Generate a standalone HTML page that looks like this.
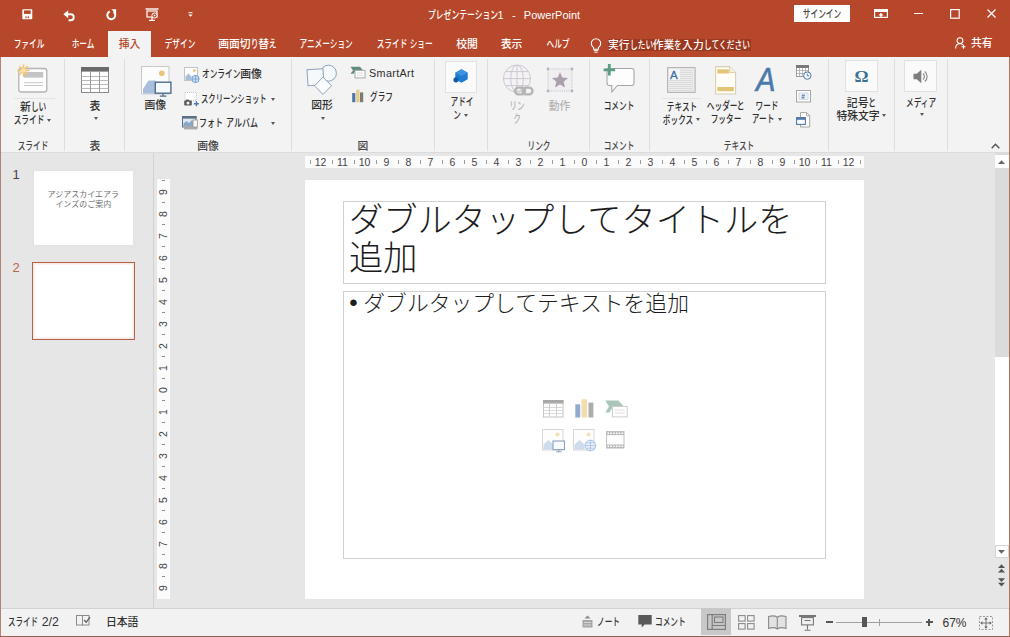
<!DOCTYPE html>
<html lang="ja"><head><meta charset="utf-8"><title>PowerPoint</title>
<style>
*{box-sizing:border-box;margin:0;padding:0}
html,body{width:1010px;height:637px;overflow:hidden;background:#e6e6e6}
body{position:relative;font-family:"Liberation Sans","Noto Sans CJK JP",sans-serif;font-size:10.8px;color:#262626}
.a{position:absolute}
.t{position:absolute;white-space:nowrap;font-weight:500}
.k,.h{display:inline-block;transform-origin:0 50%;font-weight:500}
.k{transform:scaleX(.71);margin-right:calc(var(--n)*-.29em)}
.h{transform:scaleX(.715);margin-right:calc(var(--n)*-.285em)}
.rn{font-size:10.5px;line-height:12px;color:#444}
</style></head><body>
<div class="a" style="left:0px;top:0px;width:1010px;height:57px;background:#b7472a;"></div>
<div class="a" style="left:108px;top:31px;width:43px;height:26px;background:#f3f3f3;"></div>
<div class="a" style="left:0px;top:57px;width:1010px;height:95px;background:#f3f3f3;"></div>
<div class="a" style="left:0px;top:152px;width:1010px;height:1px;background:#dcdcdc;"></div>
<div class="t" style="left:427.5px;top:7px;font-size:11px;line-height:16px;color:#fff"><span class="k" style="--n:9">プレゼンテーション</span>1 <span style="margin:0 5.2px">-</span> PowerPoint</div>
<div class="a" style="left:794px;top:5px;width:56px;height:17px;background:#fff;"></div>
<div class="t " style="top:5.5px;font-size:10.8px;line-height:16px;left:822px;transform:translateX(-50%);color:#444;"><span class="k" style="--n:5">サインイン</span></div>
<div class="t " style="top:36.4px;font-size:10.8px;line-height:16px;left:28.5px;transform:translateX(-50%);color:#fff;"><span class="k" style="--n:4">ファイル</span></div>
<div class="t " style="top:36.4px;font-size:10.8px;line-height:16px;left:82.5px;transform:translateX(-50%);color:#fff;"><span class="k" style="--n:3">ホーム</span></div>
<div class="t " style="top:36.4px;font-size:10.8px;line-height:16px;left:129.5px;transform:translateX(-50%);color:#b7472a;">挿入</div>
<div class="t " style="top:36.4px;font-size:10.8px;line-height:16px;left:179.5px;transform:translateX(-50%);color:#fff;"><span class="k" style="--n:4">デザイン</span></div>
<div class="t " style="top:36.4px;font-size:10.8px;line-height:16px;left:247.5px;transform:translateX(-50%);color:#fff;">画面切<span class="h" style="--n:1">り</span>替<span class="h" style="--n:1">え</span></div>
<div class="t " style="top:36.4px;font-size:10.8px;line-height:16px;left:325.5px;transform:translateX(-50%);color:#fff;"><span class="k" style="--n:7">アニメーション</span></div>
<div class="t " style="top:36.4px;font-size:10.8px;line-height:16px;left:404.5px;transform:translateX(-50%);color:#fff;"><span class="k" style="--n:4">スライド</span> <span class="k" style="--n:3">ショー</span></div>
<div class="t " style="top:36.4px;font-size:10.8px;line-height:16px;left:467px;transform:translateX(-50%);color:#fff;">校閲</div>
<div class="t " style="top:36.4px;font-size:10.8px;line-height:16px;left:511.5px;transform:translateX(-50%);color:#fff;">表示</div>
<div class="t " style="top:36.4px;font-size:10.8px;line-height:16px;left:558px;transform:translateX(-50%);color:#fff;"><span class="k" style="--n:3">ヘルプ</span></div>
<div class="a" style="left:607.5px;top:38.5px;width:143.5px;height:12.5px;background:#9c3920;"></div>
<div class="t " style="top:36.8px;font-size:10.8px;line-height:16px;left:608px;color:#fff;">実行<span class="h" style="--n:3">したい</span>作業<span class="h" style="--n:1">を</span>入力<span class="h" style="--n:6">してください</span></div>
<div class="t " style="top:35.0px;font-size:10.8px;line-height:16px;left:971px;color:#fff;">共有</div>
<div class="a" style="left:64px;top:59px;width:1px;height:92px;background:#dedede;"></div>
<div class="a" style="left:124px;top:59px;width:1px;height:92px;background:#dedede;"></div>
<div class="a" style="left:291px;top:59px;width:1px;height:92px;background:#dedede;"></div>
<div class="a" style="left:434px;top:59px;width:1px;height:92px;background:#dedede;"></div>
<div class="a" style="left:487px;top:59px;width:1px;height:92px;background:#dedede;"></div>
<div class="a" style="left:589px;top:59px;width:1px;height:92px;background:#dedede;"></div>
<div class="a" style="left:649px;top:59px;width:1px;height:92px;background:#dedede;"></div>
<div class="a" style="left:828px;top:59px;width:1px;height:92px;background:#dedede;"></div>
<div class="a" style="left:894px;top:59px;width:1px;height:92px;background:#dedede;"></div>
<div class="a" style="left:947px;top:59px;width:1px;height:92px;background:#dedede;"></div>
<div class="t " style="top:138.0px;font-size:10.8px;line-height:16px;left:32.6px;transform:translateX(-50%);color:#444;"><span class="k" style="--n:4">スライド</span></div>
<div class="t " style="top:138.0px;font-size:10.8px;line-height:16px;left:95px;transform:translateX(-50%);color:#444;">表</div>
<div class="t " style="top:138.0px;font-size:10.8px;line-height:16px;left:208px;transform:translateX(-50%);color:#444;">画像</div>
<div class="t " style="top:138.0px;font-size:10.8px;line-height:16px;left:363px;transform:translateX(-50%);color:#444;">図</div>
<div class="t " style="top:138.0px;font-size:10.8px;line-height:16px;left:538.5px;transform:translateX(-50%);color:#444;"><span class="k" style="--n:3">リンク</span></div>
<div class="t " style="top:138.0px;font-size:10.8px;line-height:16px;left:619px;transform:translateX(-50%);color:#444;"><span class="k" style="--n:4">コメント</span></div>
<div class="t " style="top:138.0px;font-size:10.8px;line-height:16px;left:739px;transform:translateX(-50%);color:#444;"><span class="k" style="--n:4">テキスト</span></div>
<div class="t " style="top:98.8px;font-size:10.8px;line-height:16px;left:33px;transform:translateX(-50%);color:#2e2e2e;">新<span class="h" style="--n:2">しい</span></div>
<div class="t " style="top:111.8px;font-size:10.8px;line-height:16px;left:29.2px;transform:translateX(-50%);color:#2e2e2e;"><span class="k" style="--n:4">スライド</span></div>
<div class="a" style="left:47.1px;top:118.9px;width:0;height:0;border-left:2.8px solid transparent;border-right:2.8px solid transparent;border-top:3.2px solid #585858"></div>
<div class="t " style="top:97.7px;font-size:10.8px;line-height:16px;left:95px;transform:translateX(-50%);color:#2e2e2e;">表</div>
<div class="a" style="left:93.5px;top:117.2px;width:0;height:0;border-left:2.8px solid transparent;border-right:2.8px solid transparent;border-top:3.2px solid #585858"></div>
<div class="t " style="top:97.2px;font-size:10.8px;line-height:16px;left:155.3px;transform:translateX(-50%);color:#2e2e2e;">画像</div>
<div class="t " style="top:66.0px;font-size:10.8px;line-height:16px;left:202px;color:#2e2e2e;"><span class="k" style="--n:5">オンライン</span>画像</div>
<div class="t " style="top:91.0px;font-size:10.8px;line-height:16px;left:201.2px;color:#2e2e2e;"><span class="k" style="--n:9;transform:scaleX(0.68);margin-right:-2.88em">スクリーンショット</span></div>
<div class="a" style="left:270.7px;top:97.9px;width:0;height:0;border-left:2.8px solid transparent;border-right:2.8px solid transparent;border-top:3.2px solid #585858"></div>
<div class="t " style="top:115.0px;font-size:10.8px;line-height:16px;left:199.2px;color:#2e2e2e;word-spacing:.2px;"><span class="k" style="--n:3;transform:scaleX(0.74);margin-right:-0.78em">フォト</span> <span class="k" style="--n:4;transform:scaleX(0.74);margin-right:-1.04em">アルバム</span></div>
<div class="a" style="left:270.7px;top:121.9px;width:0;height:0;border-left:2.8px solid transparent;border-right:2.8px solid transparent;border-top:3.2px solid #585858"></div>
<div class="t " style="top:97.0px;font-size:10.8px;line-height:16px;left:322px;transform:translateX(-50%);color:#2e2e2e;">図形</div>
<div class="a" style="left:320.6px;top:117.4px;width:0;height:0;border-left:2.8px solid transparent;border-right:2.8px solid transparent;border-top:3.2px solid #585858"></div>
<div class="t " style="top:65.0px;font-size:10.8px;line-height:16px;left:369px;color:#2e2e2e;letter-spacing:.35px;">SmartArt</div>
<div class="t " style="top:88.5px;font-size:10.8px;line-height:16px;left:369.5px;color:#2e2e2e;"><span class="k" style="--n:3">グラフ</span></div>
<div class="a" style="left:444.8px;top:60.5px;width:32.6px;height:32px;background:#fafafa;border:1px solid #e1e1e1"></div>
<div class="t " style="top:94.0px;font-size:10.8px;line-height:16px;left:461.5px;transform:translateX(-50%);color:#2e2e2e;"><span class="k" style="--n:3">アドイ</span></div>
<div class="t " style="top:107.0px;font-size:10.8px;line-height:16px;left:457px;transform:translateX(-50%);color:#2e2e2e;"><span class="k" style="--n:1">ン</span></div>
<div class="a" style="left:464.2px;top:113.9px;width:0;height:0;border-left:2.8px solid transparent;border-right:2.8px solid transparent;border-top:3.2px solid #585858"></div>
<div class="t " style="top:97.7px;font-size:10.8px;line-height:16px;left:517px;transform:translateX(-50%);color:#b3b3b3;"><span class="k" style="--n:2">リン</span></div>
<div class="t " style="top:110.9px;font-size:10.8px;line-height:16px;left:517px;transform:translateX(-50%);color:#b3b3b3;"><span class="k" style="--n:1">ク</span></div>
<div class="t " style="top:97.7px;font-size:10.8px;line-height:16px;left:559.5px;transform:translateX(-50%);color:#b3b3b3;">動作</div>
<div class="t " style="top:97.7px;font-size:10.8px;line-height:16px;left:619px;transform:translateX(-50%);color:#2e2e2e;"><span class="k" style="--n:4">コメント</span></div>
<div class="t " style="top:98.5px;font-size:10.8px;line-height:16px;left:681.5px;transform:translateX(-50%);color:#2e2e2e;"><span class="k" style="--n:4">テキスト</span></div>
<div class="t " style="top:111.5px;font-size:10.8px;line-height:16px;left:677.5px;transform:translateX(-50%);color:#2e2e2e;"><span class="k" style="--n:4">ボックス</span></div>
<div class="a" style="left:695.8px;top:118.4px;width:0;height:0;border-left:2.8px solid transparent;border-right:2.8px solid transparent;border-top:3.2px solid #585858"></div>
<div class="t " style="top:98.0px;font-size:10.8px;line-height:16px;left:725.5px;transform:translateX(-50%);color:#2e2e2e;"><span class="k" style="--n:4">ヘッダー</span><span class="h" style="--n:1">と</span></div>
<div class="t " style="top:111.0px;font-size:10.8px;line-height:16px;left:725.5px;transform:translateX(-50%);color:#2e2e2e;"><span class="k" style="--n:4">フッター</span></div>
<div class="t " style="top:98.0px;font-size:10.8px;line-height:16px;left:767.3px;transform:translateX(-50%);color:#2e2e2e;"><span class="k" style="--n:3">ワード</span></div>
<div class="t " style="top:111.0px;font-size:10.8px;line-height:16px;left:763px;transform:translateX(-50%);color:#2e2e2e;"><span class="k" style="--n:3">アート</span></div>
<div class="a" style="left:778.2px;top:117.9px;width:0;height:0;border-left:2.8px solid transparent;border-right:2.8px solid transparent;border-top:3.2px solid #585858"></div>
<div class="a" style="left:845px;top:60.2px;width:32.8px;height:32.3px;background:#fafafa;border:1px solid #e1e1e1"></div>
<div class="t " style="top:94.5px;font-size:10.8px;line-height:16px;left:861.5px;transform:translateX(-50%);color:#2e2e2e;">記号<span class="h" style="--n:1">と</span></div>
<div class="t " style="top:107.5px;font-size:10.8px;line-height:16px;left:858px;transform:translateX(-50%);color:#2e2e2e;">特殊文字</div>
<div class="a" style="left:881.7px;top:114.4px;width:0;height:0;border-left:2.8px solid transparent;border-right:2.8px solid transparent;border-top:3.2px solid #585858"></div>
<div class="a" style="left:904.2px;top:60.2px;width:32.8px;height:32.3px;background:#fafafa;border:1px solid #e1e1e1"></div>
<div class="t " style="top:94.5px;font-size:10.8px;line-height:16px;left:921px;transform:translateX(-50%);color:#2e2e2e;"><span class="k" style="--n:4">メディア</span></div>
<div class="a" style="left:920px;top:113.4px;width:0;height:0;border-left:2.8px solid transparent;border-right:2.8px solid transparent;border-top:3.2px solid #585858"></div>
<svg class="a" style="left:22px;top:9px" width="11" height="11" viewBox="0 0 11 11"><rect x="0.3" y="0.3" width="10" height="10" rx=".8" fill="#fff"/><rect x="1.900" y="1.400" width="6.800" height="3.500" fill="#b7472a"/><rect x="3.300" y="7.400" width="1.300" height="1.800" fill="#b7472a"/><rect x="5.700" y="7.400" width="1.300" height="1.800" fill="#b7472a"/></svg>
<svg class="a" style="left:63px;top:9.5px" width="13" height="12" viewBox="0 0 13 12"><path d="M3.500 4.300h4.200a3 3 0 0 1 0 6h-2.200" fill="none" stroke="#fff" stroke-width="2"/><path d="M5.200 0.300v8L0.400 4.300z" fill="#fff"/></svg>
<svg class="a" style="left:105px;top:9px" width="13" height="12" viewBox="0 0 13 12"><path d="M8.600 2.900A4 4 0 1 1 4.700 2.500" fill="none" stroke="#fff" stroke-width="2"/><path d="M6.300 0.300h4.800v4.800z" fill="#fff"/></svg>
<svg class="a" style="left:145px;top:8px" width="14" height="13" viewBox="0 0 14 13"><path d="M0.5 1h13" stroke="#fff" stroke-width="1.4"/><rect x="2" y="3" width="10" height="6" fill="none" stroke="#fff" stroke-width="1.2"/><path d="M7 9v3M4 12.3h6" stroke="#fff" stroke-width="1.2"/><circle cx="9.5" cy="7.5" r="2.6" fill="#b7472a" stroke="#fff" stroke-width="1"/><path d="M8.8 6.3v2.4l2-1.2z" fill="#fff"/></svg>
<svg class="a" style="left:187.5px;top:12px" width="5" height="5" viewBox="0 0 5 5"><path d="M0.5 0.7h4" stroke="#fff" stroke-width="1"/><path d="M0.3 2.4h4.4L2.5 4.8z" fill="#fff"/></svg>
<svg class="a" style="left:874px;top:9px" width="14" height="9" viewBox="0 0 14 9"><rect x="0.6" y="0.6" width="12.8" height="7.8" fill="none" stroke="#fff" stroke-width="1.2"/><rect x="0.6" y="0.6" width="12.8" height="2.4" fill="#fff"/><path d="M7 3.8l2.6 2.6h-1.7v1.4h-1.8v-1.4h-1.7z" fill="#fff"/></svg>
<div class="a" style="left:913.5px;top:13px;width:9px;height:1.2px;background:#fff;"></div>
<svg class="a" style="left:950px;top:9px" width="10" height="10" viewBox="0 0 10 10"><rect x="0.6" y="0.6" width="8.6" height="8.6" fill="none" stroke="#fff" stroke-width="1.2"/></svg>
<svg class="a" style="left:987px;top:9px" width="9" height="9" viewBox="0 0 9 9"><path d="M0.5 0.5l8 8M8.5 0.5l-8 8" stroke="#fff" stroke-width="1.2"/></svg>
<svg class="a" style="left:590px;top:37.5px" width="12" height="15" viewBox="0 0 12 15"><path d="M3.6 9.6C2.2 8.6 1.3 7.2 1.3 5.5a4.7 4.7 0 0 1 9.4 0c0 1.7-.9 3.1-2.3 4.1v1.6H3.6z" fill="none" stroke="#fff" stroke-width="1.1"/><path d="M3.8 12.6h4.4M4.4 14.2h3.2" stroke="#fff" stroke-width="1"/></svg>
<svg class="a" style="left:955px;top:37px" width="11" height="12" viewBox="0 0 11 12"><circle cx="5" cy="3.6" r="2.9" fill="none" stroke="#fff" stroke-width="1.1"/><path d="M0.6 11.5c0-3 1.8-4.7 4.4-4.7 1.2 0 2.2.4 3 1" fill="none" stroke="#fff" stroke-width="1.1"/><path d="M8.5 7.8v4M6.5 9.8h4" stroke="#fff" stroke-width="1.1"/></svg>
<svg class="a" style="left:16px;top:63px" width="32" height="31" viewBox="0 0 32 31"><rect x="2.8" y="5.5" width="28" height="23.5" rx="2.5" fill="#fdfdfd" stroke="#b4b4b4" stroke-width="1.3"/><rect x="7.7" y="9" width="19.5" height="5.6" fill="#c4c4c4"/><path d="M8 19.7h19M8 22.5h19" stroke="#c8c8c8" stroke-width="1"/><g transform="translate(1 1)"><g stroke="#f2c46a" stroke-width="1.500"><path d="M6.500 0.500v12M0.500 6.500h12M2.300 2.300l8.400 8.400M10.700 2.300l-8.400 8.400"/></g><circle cx="6.500" cy="6.500" r="2.200" fill="#fbe3a8"/></g></svg>
<div class="a" style="left:13.5px;top:98px;width:41.5px;height:1px;background:#e4e4e4;"></div>
<svg class="a" style="left:81px;top:67px" width="28" height="26" viewBox="0 0 28 26"><rect x="0.5" y="0.5" width="27" height="25" fill="#fff" stroke="#8a8a8a"/><rect x="0" y="0" width="28" height="4.6" fill="#6b6b6b"/><path d="M0.5 9.5h27" stroke="#b9b9b9"/><path d="M0.5 13.5h27" stroke="#b9b9b9"/><path d="M0.5 17.5h27" stroke="#b9b9b9"/><path d="M0.5 21.5h27" stroke="#b9b9b9"/><path d="M9.5 4v21.5M18.5 4v21.5" stroke="#9a9a9a"/></svg>
<svg class="a" style="left:141px;top:66px" width="31" height="31" viewBox="0 0 31 31"><rect x="0.5" y="0.5" width="27.5" height="27.5" fill="#fcfcfc" stroke="#c9c9c9"/><circle cx="20.8" cy="7.2" r="2.8" fill="#e9c578"/><path d="M2 27.5V23l5.500-8.500h7v13z" fill="#a9bedb"/><rect x="14.3" y="16.2" width="15.6" height="11" fill="#f3f9fd" stroke="#4f6d8c" stroke-width="1.4"/><path d="M22 27.5v2.3M18.8 30.2h6.6" stroke="#4f6d8c" stroke-width="1.3"/></svg>
<svg class="a" style="left:184px;top:67px" width="16" height="16" viewBox="0 0 16 16"><rect x="0.5" y="0.5" width="13" height="13" fill="#fcfcfc" stroke="#c4c4c4"/><circle cx="10.3" cy="3.6" r="1.4" fill="#e9c578"/><path d="M1.5 13V9.5l3-3 3 3V13z" fill="#a9bedb"/><circle cx="11.5" cy="12" r="3.6" fill="#cfe0f2" stroke="#6f9dd1" stroke-width="1"/><path d="M8 12h7M11.5 8.5v7" stroke="#6f9dd1" stroke-width=".8"/></svg>
<svg class="a" style="left:184px;top:92px" width="15" height="15" viewBox="0 0 15 15"><rect x="1" y="0.5" width="11.5" height="8" fill="#fcfcfc" stroke="#c9c9c9" stroke-dasharray="1 1"/><rect x="0.2" y="8.6" width="7.6" height="5" rx=".8" fill="#5a5a5a"/><rect x="2" y="7.6" width="3" height="1.4" fill="#5a5a5a"/><circle cx="4" cy="11.1" r="1.5" fill="#f3f3f3"/><path d="M12.4 9.3v5M9.9 11.8h5" stroke="#4a79b3" stroke-width="1.4"/></svg>
<svg class="a" style="left:182px;top:116px" width="16" height="14" viewBox="0 0 16 14"><rect x="0.5" y="0.5" width="13.5" height="10.5" fill="#dfe8f2" stroke="#5d6f85"/><rect x="0" y="0" width="14.5" height="2.6" fill="#5d6f85"/><path d="M1.5 10V7.5l3-2.5 2.5 2 3-3 3 3V10z" fill="#8aa7c7"/><rect x="2" y="10.6" width="13.5" height="2.8" fill="#a9a9a9"/><rect x="11" y="4" width="4.5" height="7" fill="#f6f6f6" stroke="#9a9a9a" stroke-width=".8"/></svg>
<svg class="a" style="left:306px;top:64px" width="32" height="32" viewBox="0 0 32 32"><circle cx="22.4" cy="9.2" r="8" fill="#f6f9fc" stroke="#8da2ba"/><rect x="1.5" y="5.2" width="16" height="16" fill="#f6f9fc" stroke="#8da2ba" transform="rotate(-4 9.5 13)"/><path d="M17 13.2l8.6 8.6-8.6 8.6-8.6-8.6z" fill="#fafcfe" stroke="#8da2ba"/></svg>
<svg class="a" style="left:350px;top:66px" width="16" height="13" viewBox="0 0 16 13"><path d="M0.5 0.8h9.5l3.2 3.6H6L3.5 7.8H0.5L3 4.4z" fill="#5f8f7c"/><rect x="5" y="4.4" width="10" height="7.5" fill="#fdfdfd" stroke="#a8a8a8"/><path d="M7 7h6M7 9.3h6" stroke="#d4d4d4" stroke-width=".8"/></svg>
<svg class="a" style="left:352px;top:89px" width="12" height="14" viewBox="0 0 12 14"><rect x="0.2" y="4" width="3.1" height="9.2" fill="#4e76a4"/><rect x="4.2" y="0.7" width="3.3" height="12.5" fill="#e8c98c"/><rect x="8" y="3.4" width="3.2" height="9.8" fill="#7d7d6e"/></svg>
<svg class="a" style="left:453px;top:69px" width="16" height="14" viewBox="0 0 16 14"><path d="M8.5 0.3l6.2 3.4v6.6l-6.2 3.4-6.2-3.4V3.7z" fill="#1e7bd0"/><path d="M8.5 0.3l6.2 3.4-6.2 3.4-6.2-3.4z" fill="#3b93e2"/><circle cx="3" cy="10.8" r="2.6" fill="#0f5ca8"/></svg>
<svg class="a" style="left:502px;top:64px" width="33" height="33" viewBox="0 0 33 33"><g fill="none" stroke="#cfc7d3" stroke-width="1"><circle cx="15" cy="14.6" r="13.6"/><ellipse cx="15" cy="14.6" rx="6.3" ry="13.6"/><path d="M15 1v27.2M1.4 14.6h27.2M3.3 7.6h23.4M3.3 21.6h23.4"/></g><g fill="none" stroke="#b4b4b4" stroke-width="2.3"><rect x="13" y="23.6" width="10" height="6.8" rx="3.4"/><rect x="20.5" y="23.6" width="10" height="6.8" rx="3.4"/></g></svg>
<svg class="a" style="left:545px;top:66px" width="30" height="28" viewBox="0 0 30 28"><rect x="3" y="3" width="24" height="22" fill="#f0eef1" stroke="#c9c3cc" stroke-dasharray="1.2 1"/><g fill="#b9b2bd"><circle cx="3" cy="3" r="1.4"/><circle cx="27" cy="3" r="1.4"/><circle cx="3" cy="25" r="1.4"/><circle cx="27" cy="25" r="1.4"/></g><path d="M15 6.2l2.3 5.3 5.7.5-4.3 3.8 1.3 5.6-5-3-5 3 1.3-5.6L7 12l5.7-.5z" fill="#a9a1ad"/></svg>
<svg class="a" style="left:603px;top:63px" width="33" height="31" viewBox="0 0 33 31"><path d="M4 5.5h24.5a2.5 2.5 0 0 1 2.5 2.500v12a2.500 2.500 0 0 1-2.500 2.500H14.500l-5.700 6.300V22.500H6.500a2.500 2.500 0 0 1-2.500-2.500z" fill="#fdfdfd" stroke="#a6a6a6" stroke-width="1.1"/><path d="M6.300 1v11.600M0.600 6.800h11.500" stroke="#5d9c82" stroke-width="2.800"/></svg>
<svg class="a" style="left:667px;top:67px" width="29" height="26" viewBox="0 0 29 26"><rect x="0.6" y="0.6" width="27.500" height="24.800" fill="#ececec" stroke="#b3b3b3" stroke-width="1.1"/><path d="M2 3.5h24" stroke="#dcdcdc" stroke-width="1"/><path d="M2 5.5h24" stroke="#dcdcdc" stroke-width="1"/><path d="M2 7.5h24" stroke="#dcdcdc" stroke-width="1"/><path d="M2 9.5h24" stroke="#dcdcdc" stroke-width="1"/><path d="M2 11.5h24" stroke="#dcdcdc" stroke-width="1"/><path d="M2 13.5h24" stroke="#dcdcdc" stroke-width="1"/><path d="M2 15.5h24" stroke="#dcdcdc" stroke-width="1"/><path d="M2 17.5h24" stroke="#dcdcdc" stroke-width="1"/><path d="M2 19.5h24" stroke="#dcdcdc" stroke-width="1"/><path d="M2 21.5h24" stroke="#dcdcdc" stroke-width="1"/><path d="M2 23.5h24" stroke="#dcdcdc" stroke-width="1"/><rect x="2" y="2" width="11" height="11" fill="#f4f4f4"/><text x="3" y="11.600" font-family="Liberation Sans,sans-serif" font-size="11.500" fill="#3c6fa8" stroke="#3c6fa8" stroke-width=".3">A</text></svg>
<div class="a" style="left:661.5px;top:98px;width:40.5px;height:1px;background:#e4e4e4;"></div>
<svg class="a" style="left:715px;top:66px" width="22" height="29" viewBox="0 0 22 29"><path d="M0.600 0.600h14l6 6v21.400h-20z" fill="#fffdf5" stroke="#d9cfb2" stroke-width="1.100"/><path d="M14.600 0.600v6h6" fill="#f6f0dc" stroke="#d9cfb2" stroke-width="1"/><rect x="2.300" y="3.300" width="11.500" height="4.200" fill="#e3c578"/><rect x="2.300" y="21" width="16.500" height="4.200" fill="#e3c578"/></svg>
<div class="t" style="left:755.500px;top:61px;font-size:33px;line-height:38px;font-style:italic;font-weight:normal;-webkit-text-stroke:.6px #4a7aab;color:#4a7aab;transform:scaleX(.88);transform-origin:0 0">A</div>
<svg class="a" style="left:796px;top:65px" width="16" height="15" viewBox="0 0 16 15"><rect x="0.500" y="0.500" width="12" height="11" fill="#fdfdfd" stroke="#9a9a9a"/><rect x="0" y="0" width="13" height="3" fill="#7a7a7a"/><path d="M3.5 3v8.500" stroke="#a9a9a9" stroke-width=".8"/><path d="M6.5 3v8.500" stroke="#a9a9a9" stroke-width=".8"/><path d="M9.5 3v8.500" stroke="#a9a9a9" stroke-width=".8"/><path d="M0.500 5.5h12" stroke="#a9a9a9" stroke-width=".8"/><path d="M0.500 8.5h12" stroke="#a9a9a9" stroke-width=".8"/><circle cx="11.300" cy="10.600" r="3.700" fill="#f4f8fc" stroke="#4f79a8" stroke-width="1"/><path d="M11.300 8.500v2.300h1.800" fill="none" stroke="#4f79a8" stroke-width=".9"/></svg>
<svg class="a" style="left:796px;top:89.5px" width="16" height="13" viewBox="0 0 16 13"><rect x="0.500" y="0.500" width="14" height="11.500" fill="#fdfdfd" stroke="#a6a6a6"/><rect x="3" y="3" width="9" height="6.500" fill="#eef3f9" stroke="#c6d3e3" stroke-width=".8"/><text x="5.200" y="9" font-family="Liberation Sans,sans-serif" font-size="6.500" font-weight="bold" fill="#3c6fa8">#</text></svg>
<svg class="a" style="left:796px;top:111.5px" width="15" height="16" viewBox="0 0 15 16"><path d="M4.500 0.600h6.200l3 3v11.400h-9.200z" fill="#fdfdfd" stroke="#a6a6a6"/><path d="M10.500 0.600v3.200h3.200" fill="none" stroke="#a6a6a6" stroke-width=".9"/><rect x="0.600" y="5.600" width="8.800" height="6.800" fill="#fdfdfd" stroke="#4f79a8" stroke-width="1.100"/><rect x="0.600" y="5.600" width="8.800" height="2.200" fill="#4f79a8"/></svg>
<div class="t" style="left:861.500px;top:63.500px;font-family:'Liberation Serif',serif;font-size:17.500px;line-height:24px;font-weight:bold;color:#3b7196;transform:translateX(-50%)">Ω</div>
<svg class="a" style="left:913px;top:69px" width="17" height="15" viewBox="0 0 17 15"><path d="M0.500 4.800h3.300L8.300 0.800v13.400L3.800 10.200H0.500z" fill="#7d7d7d"/><path d="M10 4.500a4 4 0 0 1 0 6M11.800 2.500a6.600 6.600 0 0 1 0 10" fill="none" stroke="#8d8d8d" stroke-width="1.200"/></svg>
<svg class="a" style="left:991px;top:143px" width="9" height="6" viewBox="0 0 9 6"><path d="M0.700 5.300L4.500 1.300l3.800 4" fill="none" stroke="#555" stroke-width="1.400"/></svg>
<div class="a" style="left:0px;top:153px;width:1010px;height:455px;background:#e6e6e6;"></div>
<div class="a" style="left:153px;top:153px;width:1px;height:455px;background:#d2d2d2;"></div>
<div class="t " style="top:165.0px;font-size:13px;line-height:20px;left:16.2px;transform:translateX(-50%);color:#444;">1</div>
<div class="a" style="left:33px;top:170px;width:101px;height:76.3px;background:#fff;border:1px solid #e4e4e4"></div>
<div class="t" style="left:83.300px;top:190px;font-size:8px;line-height:9.600px;color:#707070;font-weight:400;text-align:center;transform:translateX(-50%)">アジアスカイエアラ<br>インズのご案内</div>
<div class="t " style="top:258.0px;font-size:13px;line-height:20px;left:16.2px;transform:translateX(-50%);color:#b8664c;">2</div>
<div class="a" style="left:32px;top:262px;width:103px;height:77.5px;background:#fff;border:1.800px solid #b26248;box-shadow:inset 0 0 0 1.500px #fbeae3"></div>
<div class="a" style="left:305px;top:156px;width:559px;height:12px;background:#fbfbfb;"></div>
<div class="a" style="left:157px;top:179px;width:12.5px;height:420px;background:#fbfbfb;"></div>
<div class="t rn" style="left:320.5px;top:156px;transform:translateX(-50%)">12</div>
<div class="t rn" style="left:342.5px;top:156px;transform:translateX(-50%)">11</div>
<div class="t rn" style="left:364.5px;top:156px;transform:translateX(-50%)">10</div>
<div class="t rn" style="left:386.5px;top:156px;transform:translateX(-50%)">9</div>
<div class="t rn" style="left:408.5px;top:156px;transform:translateX(-50%)">8</div>
<div class="t rn" style="left:430.5px;top:156px;transform:translateX(-50%)">7</div>
<div class="t rn" style="left:452.5px;top:156px;transform:translateX(-50%)">6</div>
<div class="t rn" style="left:474.5px;top:156px;transform:translateX(-50%)">5</div>
<div class="t rn" style="left:496.5px;top:156px;transform:translateX(-50%)">4</div>
<div class="t rn" style="left:518.5px;top:156px;transform:translateX(-50%)">3</div>
<div class="t rn" style="left:540.5px;top:156px;transform:translateX(-50%)">2</div>
<div class="t rn" style="left:562.5px;top:156px;transform:translateX(-50%)">1</div>
<div class="t rn" style="left:584.5px;top:156px;transform:translateX(-50%)">0</div>
<div class="t rn" style="left:606.5px;top:156px;transform:translateX(-50%)">1</div>
<div class="t rn" style="left:628.5px;top:156px;transform:translateX(-50%)">2</div>
<div class="t rn" style="left:650.5px;top:156px;transform:translateX(-50%)">3</div>
<div class="t rn" style="left:672.5px;top:156px;transform:translateX(-50%)">4</div>
<div class="t rn" style="left:694.5px;top:156px;transform:translateX(-50%)">5</div>
<div class="t rn" style="left:716.5px;top:156px;transform:translateX(-50%)">6</div>
<div class="t rn" style="left:738.5px;top:156px;transform:translateX(-50%)">7</div>
<div class="t rn" style="left:760.5px;top:156px;transform:translateX(-50%)">8</div>
<div class="t rn" style="left:782.5px;top:156px;transform:translateX(-50%)">9</div>
<div class="t rn" style="left:804.5px;top:156px;transform:translateX(-50%)">10</div>
<div class="t rn" style="left:826.5px;top:156px;transform:translateX(-50%)">11</div>
<div class="t rn" style="left:848.5px;top:156px;transform:translateX(-50%)">12</div>
<div class="a" style="left:309.5px;top:160px;width:1px;height:4px;background:#9a9a9a;"></div>
<div class="a" style="left:331.5px;top:160px;width:1px;height:4px;background:#9a9a9a;"></div>
<div class="a" style="left:353.5px;top:160px;width:1px;height:4px;background:#9a9a9a;"></div>
<div class="a" style="left:375.5px;top:160px;width:1px;height:4px;background:#9a9a9a;"></div>
<div class="a" style="left:397.5px;top:160px;width:1px;height:4px;background:#9a9a9a;"></div>
<div class="a" style="left:419.5px;top:160px;width:1px;height:4px;background:#9a9a9a;"></div>
<div class="a" style="left:441.5px;top:160px;width:1px;height:4px;background:#9a9a9a;"></div>
<div class="a" style="left:463.5px;top:160px;width:1px;height:4px;background:#9a9a9a;"></div>
<div class="a" style="left:485.5px;top:160px;width:1px;height:4px;background:#9a9a9a;"></div>
<div class="a" style="left:507.5px;top:160px;width:1px;height:4px;background:#9a9a9a;"></div>
<div class="a" style="left:529.5px;top:160px;width:1px;height:4px;background:#9a9a9a;"></div>
<div class="a" style="left:551.5px;top:160px;width:1px;height:4px;background:#9a9a9a;"></div>
<div class="a" style="left:573.5px;top:160px;width:1px;height:4px;background:#9a9a9a;"></div>
<div class="a" style="left:595.5px;top:160px;width:1px;height:4px;background:#9a9a9a;"></div>
<div class="a" style="left:617.5px;top:160px;width:1px;height:4px;background:#9a9a9a;"></div>
<div class="a" style="left:639.5px;top:160px;width:1px;height:4px;background:#9a9a9a;"></div>
<div class="a" style="left:661.5px;top:160px;width:1px;height:4px;background:#9a9a9a;"></div>
<div class="a" style="left:683.5px;top:160px;width:1px;height:4px;background:#9a9a9a;"></div>
<div class="a" style="left:705.5px;top:160px;width:1px;height:4px;background:#9a9a9a;"></div>
<div class="a" style="left:727.5px;top:160px;width:1px;height:4px;background:#9a9a9a;"></div>
<div class="a" style="left:749.5px;top:160px;width:1px;height:4px;background:#9a9a9a;"></div>
<div class="a" style="left:771.5px;top:160px;width:1px;height:4px;background:#9a9a9a;"></div>
<div class="a" style="left:793.5px;top:160px;width:1px;height:4px;background:#9a9a9a;"></div>
<div class="a" style="left:815.5px;top:160px;width:1px;height:4px;background:#9a9a9a;"></div>
<div class="a" style="left:837.5px;top:160px;width:1px;height:4px;background:#9a9a9a;"></div>
<div class="a" style="left:859.5px;top:160px;width:1px;height:4px;background:#9a9a9a;"></div>
<div class="t rn" style="left:163.300px;top:191.5px;transform:translate(-50%,-50%) rotate(-90deg);transform-origin:50% 50%">9</div>
<div class="t rn" style="left:163.300px;top:213.5px;transform:translate(-50%,-50%) rotate(-90deg);transform-origin:50% 50%">8</div>
<div class="t rn" style="left:163.300px;top:235.5px;transform:translate(-50%,-50%) rotate(-90deg);transform-origin:50% 50%">7</div>
<div class="t rn" style="left:163.300px;top:257.5px;transform:translate(-50%,-50%) rotate(-90deg);transform-origin:50% 50%">6</div>
<div class="t rn" style="left:163.300px;top:279.5px;transform:translate(-50%,-50%) rotate(-90deg);transform-origin:50% 50%">5</div>
<div class="t rn" style="left:163.300px;top:301.5px;transform:translate(-50%,-50%) rotate(-90deg);transform-origin:50% 50%">4</div>
<div class="t rn" style="left:163.300px;top:323.5px;transform:translate(-50%,-50%) rotate(-90deg);transform-origin:50% 50%">3</div>
<div class="t rn" style="left:163.300px;top:345.5px;transform:translate(-50%,-50%) rotate(-90deg);transform-origin:50% 50%">2</div>
<div class="t rn" style="left:163.300px;top:367.5px;transform:translate(-50%,-50%) rotate(-90deg);transform-origin:50% 50%">1</div>
<div class="t rn" style="left:163.300px;top:389.5px;transform:translate(-50%,-50%) rotate(-90deg);transform-origin:50% 50%">0</div>
<div class="t rn" style="left:163.300px;top:411.5px;transform:translate(-50%,-50%) rotate(-90deg);transform-origin:50% 50%">1</div>
<div class="t rn" style="left:163.300px;top:433.5px;transform:translate(-50%,-50%) rotate(-90deg);transform-origin:50% 50%">2</div>
<div class="t rn" style="left:163.300px;top:455.5px;transform:translate(-50%,-50%) rotate(-90deg);transform-origin:50% 50%">3</div>
<div class="t rn" style="left:163.300px;top:477.5px;transform:translate(-50%,-50%) rotate(-90deg);transform-origin:50% 50%">4</div>
<div class="t rn" style="left:163.300px;top:499.5px;transform:translate(-50%,-50%) rotate(-90deg);transform-origin:50% 50%">5</div>
<div class="t rn" style="left:163.300px;top:521.5px;transform:translate(-50%,-50%) rotate(-90deg);transform-origin:50% 50%">6</div>
<div class="t rn" style="left:163.300px;top:543.5px;transform:translate(-50%,-50%) rotate(-90deg);transform-origin:50% 50%">7</div>
<div class="t rn" style="left:163.300px;top:565.5px;transform:translate(-50%,-50%) rotate(-90deg);transform-origin:50% 50%">8</div>
<div class="t rn" style="left:163.300px;top:587.5px;transform:translate(-50%,-50%) rotate(-90deg);transform-origin:50% 50%">9</div>
<div class="a" style="left:161.5px;top:179.5px;width:3px;height:1px;background:#8f8f8f;"></div>
<div class="a" style="left:161.5px;top:201.5px;width:3px;height:1px;background:#8f8f8f;"></div>
<div class="a" style="left:161.5px;top:223.5px;width:3px;height:1px;background:#8f8f8f;"></div>
<div class="a" style="left:161.5px;top:245.5px;width:3px;height:1px;background:#8f8f8f;"></div>
<div class="a" style="left:161.5px;top:267.5px;width:3px;height:1px;background:#8f8f8f;"></div>
<div class="a" style="left:161.5px;top:289.5px;width:3px;height:1px;background:#8f8f8f;"></div>
<div class="a" style="left:161.5px;top:311.5px;width:3px;height:1px;background:#8f8f8f;"></div>
<div class="a" style="left:161.5px;top:333.5px;width:3px;height:1px;background:#8f8f8f;"></div>
<div class="a" style="left:161.5px;top:355.5px;width:3px;height:1px;background:#8f8f8f;"></div>
<div class="a" style="left:161.5px;top:377.5px;width:3px;height:1px;background:#8f8f8f;"></div>
<div class="a" style="left:161.5px;top:399.5px;width:3px;height:1px;background:#8f8f8f;"></div>
<div class="a" style="left:161.5px;top:421.5px;width:3px;height:1px;background:#8f8f8f;"></div>
<div class="a" style="left:161.5px;top:443.5px;width:3px;height:1px;background:#8f8f8f;"></div>
<div class="a" style="left:161.5px;top:465.5px;width:3px;height:1px;background:#8f8f8f;"></div>
<div class="a" style="left:161.5px;top:487.5px;width:3px;height:1px;background:#8f8f8f;"></div>
<div class="a" style="left:161.5px;top:509.5px;width:3px;height:1px;background:#8f8f8f;"></div>
<div class="a" style="left:161.5px;top:531.5px;width:3px;height:1px;background:#8f8f8f;"></div>
<div class="a" style="left:161.5px;top:553.5px;width:3px;height:1px;background:#8f8f8f;"></div>
<div class="a" style="left:161.5px;top:575.5px;width:3px;height:1px;background:#8f8f8f;"></div>
<div class="a" style="left:305px;top:180px;width:559px;height:419px;background:#fff;"></div>
<div class="a" style="left:343px;top:201px;width:483px;height:83px;background:#fff;border:1px solid #d0d0d0"></div>
<div class="a" style="left:343px;top:291px;width:483px;height:268px;background:#fff;border:1px solid #d0d0d0"></div>
<div class="t" style="left:349px;top:202.300px;font-size:34.200px;line-height:37.500px;font-weight:300;color:#1c1c1c;white-space:normal;width:470px">ダブルタップしてタイトルを<br>追加</div>
<div class="t" style="left:349.300px;top:288.600px;font-size:21.800px;line-height:30px;font-weight:300;color:#1c1c1c"><span style="display:inline-block;width:14px;font-size:24px;line-height:20px;font-family:'Liberation Sans',sans-serif">•</span>ダブルタップしてテキストを追加</div>
<svg class="a" style="left:542.5px;top:399.5px" width="21" height="18" viewBox="0 0 21 18"><rect x="0.500" y="0.500" width="19.500" height="16.500" fill="#fff" stroke="#c4c4c4"/><rect x="0" y="0" width="20.500" height="3.600" fill="#a9a9a9"/><path d="M0.500 7.5h19" stroke="#d9d9d9"/><path d="M0.500 10.5h19" stroke="#d9d9d9"/><path d="M0.500 13.5h19" stroke="#d9d9d9"/><path d="M6.500 3v14M13.500 3v14" stroke="#d0d0d0"/></svg>
<svg class="a" style="left:574.5px;top:399px" width="19" height="19" viewBox="0 0 19 19"><rect x="0.300" y="5.300" width="4.900" height="13.200" fill="#8fabd1"/><rect x="6.500" y="0.300" width="5.600" height="18.200" fill="#f3dcae"/><rect x="13.500" y="3.600" width="4.900" height="14.900" fill="#adadad"/></svg>
<svg class="a" style="left:604.5px;top:400px" width="23" height="18" viewBox="0 0 23 18"><path d="M0.300 0.400h13l5.500 6H8l-3.500 6H0.300L4 6.400z" fill="#a9c6b9"/><rect x="7.500" y="6.500" width="14.700" height="10.400" fill="#fdfdfd" stroke="#cdcdcd"/><path d="M10 10h10M10 13h10" stroke="#e2e2e2"/></svg>
<svg class="a" style="left:542px;top:429px" width="24" height="24" viewBox="0 0 24 24"><rect x="0.500" y="0.500" width="20.500" height="20.500" fill="#fdfdfd" stroke="#d6d6d6"/><circle cx="15.500" cy="5.500" r="2.100" fill="#f5e2b8"/><path d="M1.500 20.500v-5l5-4.500 5 4.500v5z" fill="#cfdcec"/><rect x="11" y="12" width="11.500" height="8.600" fill="#f8fbfe" stroke="#8ea3bb" stroke-width="1.100"/><path d="M16.800 20.600v2M14 22.800h5.600" stroke="#8ea3bb" stroke-width="1"/></svg>
<svg class="a" style="left:573px;top:429px" width="24" height="24" viewBox="0 0 24 24"><rect x="0.500" y="0.500" width="20.500" height="20.500" fill="#fdfdfd" stroke="#d6d6d6"/><circle cx="15.500" cy="5.500" r="2.100" fill="#f5e2b8"/><path d="M1.500 20.500v-5l5-4.500 5 4.500v5z" fill="#cfdcec"/><circle cx="17.400" cy="16.500" r="5.300" fill="#eaf1fa" stroke="#a6c0e3" stroke-width="1"/><path d="M12.100 16.500h10.600M17.400 11.200v10.600M13 13.800h8.800M13 19.200h8.800" stroke="#a6c0e3" stroke-width=".8"/></svg>
<svg class="a" style="left:606px;top:431px" width="19" height="18" viewBox="0 0 19 18"><rect x="0.500" y="0.500" width="17.500" height="16.500" fill="#fdfdfd" stroke="#c2c2c2"/><rect x="0.500" y="0.500" width="17.500" height="3.600" fill="#b7b7b7"/><rect x="0.500" y="13.500" width="17.500" height="3.600" fill="#b7b7b7"/><rect x="1.5" y="1.500" width="1.600" height="1.600" fill="#fff"/><rect x="1.5" y="14.500" width="1.600" height="1.600" fill="#fff"/><rect x="4.3" y="1.500" width="1.600" height="1.600" fill="#fff"/><rect x="4.3" y="14.500" width="1.600" height="1.600" fill="#fff"/><rect x="7.1" y="1.500" width="1.600" height="1.600" fill="#fff"/><rect x="7.1" y="14.500" width="1.600" height="1.600" fill="#fff"/><rect x="9.9" y="1.500" width="1.600" height="1.600" fill="#fff"/><rect x="9.9" y="14.500" width="1.600" height="1.600" fill="#fff"/><rect x="12.7" y="1.500" width="1.600" height="1.600" fill="#fff"/><rect x="12.7" y="14.500" width="1.600" height="1.600" fill="#fff"/><rect x="15.5" y="1.500" width="1.600" height="1.600" fill="#fff"/><rect x="15.5" y="14.500" width="1.600" height="1.600" fill="#fff"/></svg>
<div class="a" style="left:994.5px;top:153px;width:14px;height:437px;background:#dbdbdb;"></div>
<div class="a" style="left:994.5px;top:155px;width:14px;height:13.3px;background:#fff;"></div>
<svg class="a" style="left:998px;top:159.5px" width="7" height="4" viewBox="0 0 7 4"><path d="M0 4L3.500 0.300 7 4z" fill="#666"/></svg>
<div class="a" style="left:994.5px;top:357px;width:14px;height:188px;background:#fff;"></div>
<div class="a" style="left:994.5px;top:545px;width:14px;height:13px;background:#fff;border:1px solid #d6d6d6"></div>
<svg class="a" style="left:998px;top:550px" width="7" height="4" viewBox="0 0 7 4"><path d="M0 0L3.500 3.700 7 0z" fill="#666"/></svg>
<div class="a" style="left:994.5px;top:558px;width:14px;height:50px;background:#e6e6e6;"></div>
<svg class="a" style="left:998px;top:563.5px" width="7" height="9" viewBox="0 0 7 9"><path d="M0 4L3.500 0.300 7 4zM0 8.500L3.500 4.800 7 8.500z" fill="#555"/></svg>
<svg class="a" style="left:998px;top:577.5px" width="7" height="9" viewBox="0 0 7 9"><path d="M0 0.300L3.500 4 7 0.300zM0 4.800L3.500 8.500 7 4.800z" fill="#555"/></svg>
<div class="a" style="left:0px;top:607.5px;width:1010px;height:1px;background:#d2d2d2;"></div>
<div class="a" style="left:0px;top:608.5px;width:1010px;height:28.5px;background:#f2f2f2;"></div>
<div class="t" style="left:7.800px;top:613.400px;font-size:11px;line-height:18px;color:#333"><span class="k" style="--n:4;transform:scaleX(0.68);margin-right:-1.28em">スライド</span> <span style="font-size:12.300px;margin-left:1px">2/2</span></div>
<svg class="a" style="left:76px;top:615px" width="15" height="11" viewBox="0 0 15 11"><rect x="0.500" y="0.500" width="6" height="9.500" fill="none" stroke="#8a8a8a"/><rect x="6.500" y="0.500" width="6.500" height="9.500" fill="none" stroke="#8a8a8a"/><path d="M8.200 5l2 2.300 3.800-5.300" fill="none" stroke="#555" stroke-width="1.200"/></svg>
<div class="t " style="top:614.0px;font-size:10.8px;line-height:16px;left:106px;color:#333;">日本語</div>
<svg class="a" style="left:582px;top:615px" width="11" height="13" viewBox="0 0 11 13"><path d="M5.500 0.500l3 3h-6z" fill="#8a8a8a"/><rect x="0.500" y="5" width="10" height="7.500" fill="#a6a6a6"/><path d="M2 7.500h7M2 10h7" stroke="#dcdcdc" stroke-width=".9"/></svg>
<div class="t " style="top:614.0px;font-size:10.8px;line-height:16px;left:597px;color:#333;"><span class="k" style="--n:3">ノート</span></div>
<svg class="a" style="left:638px;top:615.2px" width="14" height="13" viewBox="0 0 14 13"><path d="M0.300 0h13.400v9.500h-7l-3 3v-3h-3.400z" fill="#5a5a5a"/></svg>
<div class="t " style="top:614.0px;font-size:10.8px;line-height:16px;left:655px;color:#333;"><span class="k" style="--n:4">コメント</span></div>
<div class="a" style="left:700.5px;top:608px;width:30.5px;height:27px;background:#c8c8c8;"></div>
<svg class="a" style="left:706.5px;top:614px" width="19" height="16" viewBox="0 0 19 16"><rect x="0.600" y="0.600" width="17.800" height="14.800" fill="none" stroke="#7d7d7d" stroke-width="1.200"/><path d="M5.200 0.600v14.800" stroke="#7d7d7d" stroke-width="1.200"/><rect x="7.500" y="3" width="8.500" height="5.500" fill="none" stroke="#7d7d7d" stroke-width="1.100"/><path d="M5.200 11.500h13" stroke="#7d7d7d" stroke-width="1.100"/></svg>
<svg class="a" style="left:737.5px;top:614.5px" width="17" height="15" viewBox="0 0 17 15"><rect x="0.6" y="0.6" width="6.500" height="5.500" fill="none" stroke="#8a8a8a" stroke-width="1.100"/><rect x="0.6" y="8.6" width="6.500" height="5.500" fill="none" stroke="#8a8a8a" stroke-width="1.100"/><rect x="9.6" y="0.6" width="6.500" height="5.500" fill="none" stroke="#8a8a8a" stroke-width="1.100"/><rect x="9.6" y="8.6" width="6.500" height="5.500" fill="none" stroke="#8a8a8a" stroke-width="1.100"/></svg>
<svg class="a" style="left:767.5px;top:615px" width="19" height="15" viewBox="0 0 19 15"><path d="M9.300 2.200C7 0.600 3.500 0.600 0.600 1.600v11.800c2.900-1 6.400-1 8.700 0.600 2.300-1.600 5.800-1.600 8.700-0.600V1.600C15.100 0.600 11.600 0.600 9.300 2.200zM9.300 2.200V14" fill="#e2e2e2" stroke="#8a8a8a" stroke-width="1.100"/></svg>
<svg class="a" style="left:799px;top:614.5px" width="17" height="16" viewBox="0 0 17 16"><path d="M0 1h17" stroke="#555" stroke-width="1.600"/><rect x="2.600" y="2.600" width="11.800" height="7.300" fill="none" stroke="#777" stroke-width="1.100"/><path d="M5.500 5.500h6" stroke="#777" stroke-width="1.100"/><path d="M8.500 10v4.500M5.500 15.200h6" stroke="#777" stroke-width="1.100"/></svg>
<div class="a" style="left:826px;top:621.3px;width:6.5px;height:1.8px;background:#555;"></div>
<div class="a" style="left:836px;top:621.8px;width:86px;height:1px;background:#a0a0a0;"></div>
<div class="a" style="left:862.3px;top:617px;width:4.5px;height:10px;background:#555;"></div>
<div class="a" style="left:878.5px;top:618.5px;width:1px;height:7px;background:#a0a0a0;"></div>
<div class="a" style="left:925.5px;top:621.3px;width:7.2px;height:1.8px;background:#555;"></div>
<div class="a" style="left:928.2px;top:618.6px;width:1.8px;height:7.2px;background:#555;"></div>
<div class="t " style="top:613.5px;font-size:12px;line-height:18px;left:942.5px;color:#333;">67%</div>
<svg class="a" style="left:979px;top:615.5px" width="14" height="14" viewBox="0 0 14 14"><rect x="0.500" y="0.500" width="13" height="13" fill="none" stroke="#9a9a9a" stroke-dasharray="2 1.500"/><path d="M7 2.200v9.600M2.200 7h9.600" stroke="#777" stroke-width="1"/><path d="M7 1.200l1.800 2.200h-3.600zM7 12.800l1.800-2.200h-3.600zM1.200 7l2.200-1.800v3.600zM12.800 7l-2.200-1.800v3.600z" fill="#666"/></svg>
<div class="a" style="left:0px;top:57px;width:1px;height:580px;background:#b08272;"></div>
<div class="a" style="left:1008.6px;top:57px;width:1.4px;height:580px;background:#b0745a;"></div>
<div class="a" style="left:0px;top:635.5px;width:1010px;height:1.5px;background:#96604c;"></div>
</body></html>
